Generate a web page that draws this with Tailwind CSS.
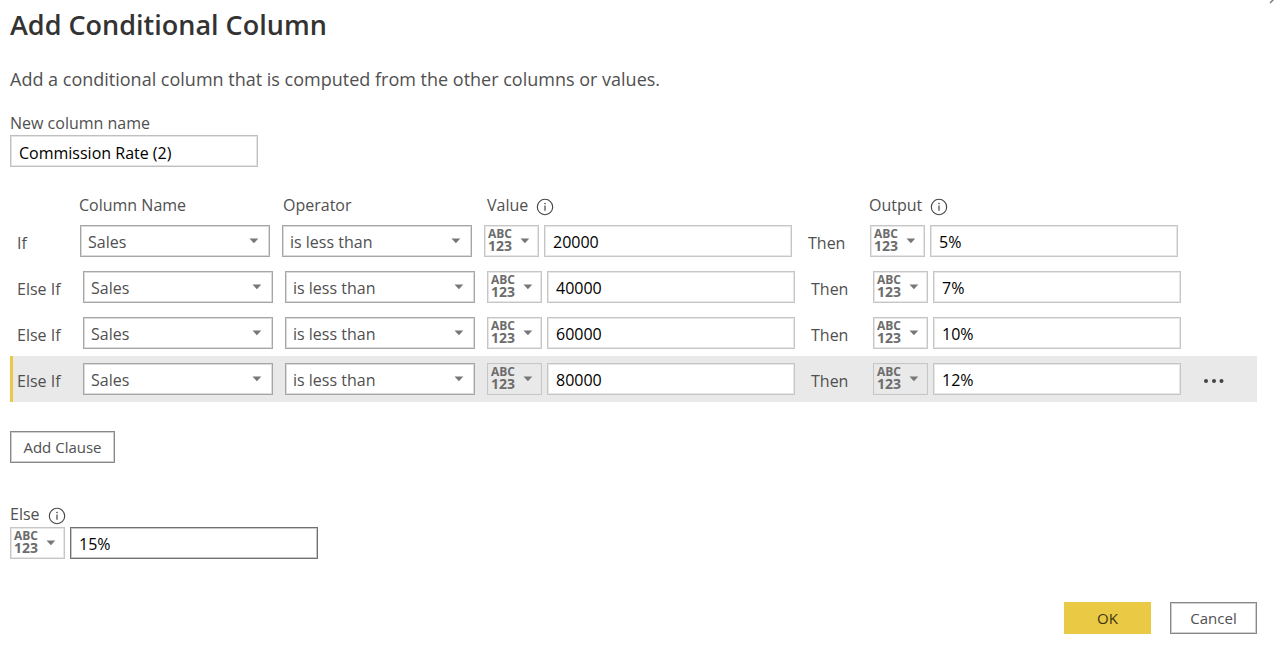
<!DOCTYPE html>
<html lang="en">
<head>
<meta charset="utf-8">
<meta name="viewport" content="width=device-width, initial-scale=1">
<title>Add Conditional Column</title>
<script src="https://cdn.jsdelivr.net/npm/@tailwindcss/browser@4"></script>
</head>
<body class="bg-white font-['Open_Sans','Noto_Sans',sans-serif] text-base text-[#505050]">
<svg class="hidden" aria-hidden="true">
  <symbol id="caret" viewBox="0 0 10 6"><path d="M0.5 0.5h8.8L4.9 5.3z" fill="#777"/></symbol>
  <symbol id="info" viewBox="0 0 18 18"><circle cx="9" cy="9" r="7.7" fill="none" stroke="#444" stroke-width="1.1"/><path d="M9 7.6v5.2" stroke="#444" stroke-width="1.2"/><circle cx="9" cy="5.5" r=".8" fill="#444"/></symbol>
</svg>
<button type="button" aria-label="Close" class="absolute right-0 top-0 h-1 w-3"><svg class="h-1 w-3" viewBox="0 0 12 4"><path d="M2 3L5.5 -0.5" stroke="#777" stroke-width="1.4"/></svg></button>
<form class="pr-[23px] pl-[10px] pb-4" onsubmit="return false">
  <h1 class="pt-1 text-[27px] leading-[42px] font-semibold text-[#333]">Add Conditional Column</h1>
  <p class="mt-[21px] text-[18px] leading-6">Add a conditional column that is computed from the other columns or values.</p>
  <label for="name" class="mt-5 block leading-6">New column name</label>
  <input id="name" value="Commission Rate (2)" class="block h-8 w-62 border border-[#c0c0c0] px-2 pt-[3px] text-black inset-ring inset-ring-[#e4e4e4]">

  <div class="mt-[25px] flex h-[26px] items-center pl-[69px]">
    <span class="w-51">Column Name</span>
    <span class="w-51">Operator</span>
    <span class="flex w-[382px] items-center gap-2">Value <svg class="mt-1 size-[18px]"><use href="#info"/></svg></span>
    <span class="flex items-center gap-2">Output <svg class="mt-1 size-[18px]"><use href="#info"/></svg></span>
  </div>
  <div id="rows"></div>

  <button type="button" class="mt-[29px] block h-8 w-[105px] border border-[#888] pt-px text-[15px] inset-ring inset-ring-[#cfcfcf]">Add Clause</button>

  <label for="else" class="mt-[38px] flex h-[25px] items-center gap-2">Else <svg class="mt-1 size-[18px]"><use href="#info"/></svg></label>
  <div id="elseRow" class="mt-px flex gap-[5px]"></div>

  <div class="mt-[43px] flex justify-end gap-[19px]">
    <button type="submit" class="h-8 w-[87px] bg-[#eac944] pt-px text-[15px] text-[#3c3515]">OK</button>
    <button type="button" class="h-8 w-[87px] border border-[#888] pt-px text-[15px] inset-ring inset-ring-[#cfcfcf]">Cancel</button>
  </div>
</form>
<script>
const caret = '<svg class="h-1.5 w-2.5" aria-hidden="true"><use href="#caret"/></svg>';
const typeButton = label => `<button type="button" aria-label="${label}" class="flex h-8 w-[55px] shrink-0 items-center justify-between border border-[#c6c6c6] pr-2 pl-[3px] inset-ring inset-ring-[#e6e6e6]">
  <span class="flex flex-col pb-0.5 text-left font-bold text-[#6c6c6c]"><span class="text-[12px] leading-[12px]">ABC</span><span class="text-[14px] leading-[12px]">123</span></span>${caret}</button>`;
const select = (label, text) => `<div class="mr-3 grid w-[190px] shrink-0 items-center">
  <select aria-label="${label}" class="col-start-1 row-start-1 h-8 w-full appearance-none border border-[#a6a6a6] bg-white pt-0.5 pl-[7px] inset-ring inset-ring-[#dadada]"><option>${text}</option></select>
  <svg class="pointer-events-none col-start-1 row-start-1 mr-[11px] h-1.5 w-2.5 justify-self-end" aria-hidden="true"><use href="#caret"/></svg></div>`;
const input = (label, value) => `<input aria-label="${label}" value="${value}" class="h-8 w-62 shrink-0 border border-[#c6c6c6] bg-white px-2 pt-0.5 text-black inset-ring inset-ring-[#e6e6e6]">`;

const clauses = [['If', '20000', '5%'], ['Else If', '40000', '7%'], ['Else If', '60000', '10%'], ['Else If', '80000', '12%']];
document.getElementById('rows').innerHTML = clauses.map(([word, value, output], i) => `
<div class="flex h-[46px] items-center border-l-3 pl-1 ${i === 3 ? 'border-[#eac944] bg-[#e9e9e9]' : 'border-transparent'}">
  <span class="shrink-0 pt-1 ${i ? 'w-[66px]' : 'w-[63px]'}">${word}</span>
  ${select('Column name', 'Sales')}${select('Operator', 'is less than')}
  <div class="flex gap-[5px]">${typeButton('Value type')}${input('Value', value)}</div>
  <span class="w-[78px] shrink-0 pt-1 pl-4">Then</span>
  <div class="flex gap-[5px]">${typeButton('Output type')}${input('Output', output)}</div>
  ${i === 3 ? `<button type="button" aria-label="More" class="ml-[21px] flex h-8 w-6 items-center justify-center pt-1"><svg class="h-1 w-5" viewBox="0 0 20 4" fill="#444"><circle cx="2" cy="2" r="2"/><circle cx="10" cy="2" r="2"/><circle cx="17.5" cy="2" r="2"/></svg></button>` : ''}
</div>`).join('');
document.getElementById('elseRow').innerHTML = typeButton('Else type') +
  '<input id="else" value="15%" class="h-8 w-62 border border-[#707070] px-2 pt-0.5 text-black inset-ring inset-ring-[#c8c8c8]">';
</script>
</body>
</html>
